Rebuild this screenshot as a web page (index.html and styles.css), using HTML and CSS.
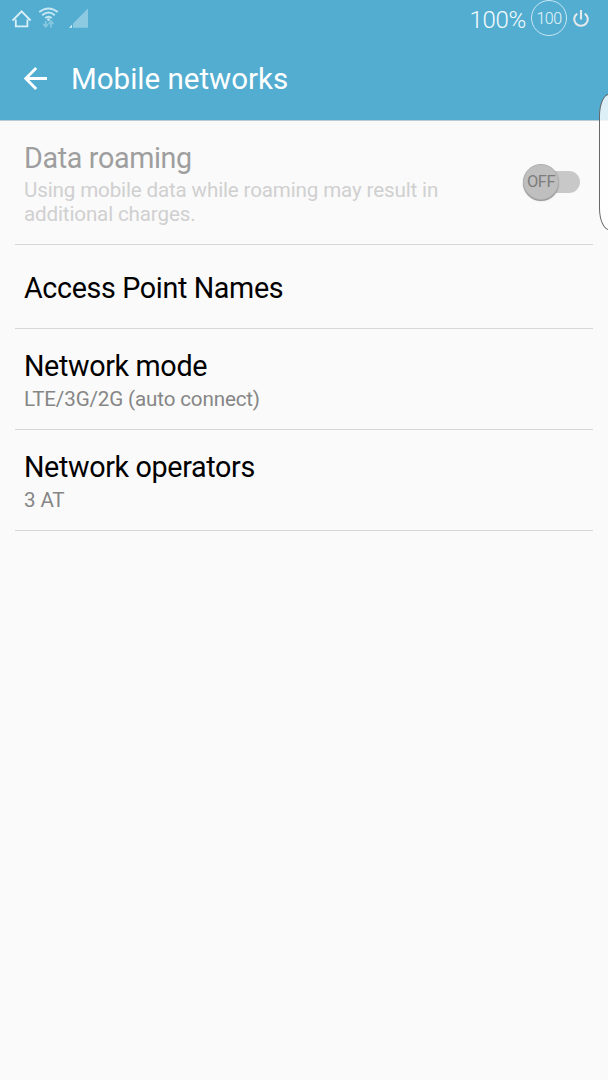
FILE: index.html
```html
<!DOCTYPE html>
<html lang="en">
<head>
  <meta charset="UTF-8">
  <meta name="viewport" content="width=device-width, initial-scale=1.0">
  <title>Mobile networks</title>
  <link rel="stylesheet" href="styles.css">
</head>
<body>
  <header class="header">
    <div class="status-bar">
      <div class="status-left">
        <svg class="icon-home" width="20" height="18" viewBox="0 0 20 18">
          <path d="M0.6 10.5 L9.6 1.4 L18.6 10.5 M3.8 9.5 V16.4 H15.4 V9.5" />
        </svg>
        <svg class="icon-wifi" width="22" height="22" viewBox="0 0 22 22">
          <path class="wave" d="M1.2 5 Q10.5 -2.2 19.8 5 M4.2 8.2 Q10.5 3 16.8 8.2 M7.2 11 Q10.5 8.4 13.8 11" />
          <circle cx="10.5" cy="12.6" r="1.4" />
          <path class="arrows" d="M7.7 14 V19.5 M5.4 17 L7.7 19.8 L10 17 M13 20.5 V15 M10.7 17 L13 14.2 L15.3 17" />
        </svg>
        <svg class="icon-signal" width="20" height="20" viewBox="0 0 20 20">
          <path class="empty" d="M19 0.5 V19.8 H4 V15.5 Z" />
          <path class="level" d="M0 19.8 L3 16.8 V19.8 Z" />
        </svg>
      </div>
      <div class="status-right">
        <span class="percent">100%</span>
        <span class="battery">100</span>
        <svg class="icon-power" width="18" height="20" viewBox="0 0 18 20">
          <path d="M5.3 4.6 A6.8 6.6 0 1 0 12.7 4.6 M9 1 V10.5" />
        </svg>
      </div>
    </div>
    <div class="app-bar">
      <svg class="icon-back" width="24" height="24" viewBox="0 0 24 24">
        <path d="M12.2 1 L1.8 11.5 L12.2 22 M2 11.5 H23" />
      </svg>
      <h1 class="title">Mobile networks</h1>
    </div>
  </header>

  <main class="settings">
    <div class="setting disabled">
      <div class="setting-text">
        <h2 class="setting-title">Data roaming</h2>
        <p class="setting-summary">Using mobile data while roaming may result in additional charges.</p>
      </div>
      <div class="switch">
        <div class="switch-thumb">OFF</div>
      </div>
    </div>
    <div class="setting single">
      <h2 class="setting-title">Access Point Names</h2>
    </div>
    <div class="setting">
      <div class="setting-text">
        <h2 class="setting-title">Network mode</h2>
        <p class="setting-summary">LTE/3G/2G (auto connect)</p>
      </div>
    </div>
    <div class="setting">
      <div class="setting-text">
        <h2 class="setting-title">Network operators</h2>
        <p class="setting-summary">3 AT</p>
      </div>
    </div>
  </main>

  <div class="edge-handle"></div>
</body>
</html>
```
FILE: styles.css
```css
:root {
  --primary-color: #52add1;
  --background-color: #fafafa;
  --divider-color: #d6d6d6;
}

* {
  box-sizing: border-box;
}

body {
  font-family: Roboto, sans-serif;
  position: relative;
  height: 1080px;
  margin: 0;
  overflow: hidden;
  background-color: var(--background-color);
  color: #000000;
}

h1,
h2,
p {
  margin: 0;
  font-weight: normal;
}

svg {
  display: block;
  fill: none;
}

.header {
  height: 121px;
  background-color: var(--primary-color);
  border-bottom: 1px solid #b9cbd4;
  color: #ffffff;
}

.status-bar {
  display: flex;
  justify-content: space-between;
  height: 36px;
  padding: 0 18px 0 12px;
}

.status-left,
.status-right {
  display: flex;
  align-items: center;
}

.status-left {
  align-items: flex-start;
}

.icon-home {
  margin-top: 10px;
  stroke: #d9f0f9;
  stroke-width: 1.8;
}

.icon-wifi {
  margin: 7px 0 0 6px;
}

.icon-wifi .wave {
  stroke: #c5e6f3;
  stroke-width: 1.9;
}

.icon-wifi circle {
  fill: #c5e6f3;
}

.icon-wifi .arrows {
  stroke: #86c7e0;
  stroke-width: 1.8;
}

.icon-signal {
  margin: 8px 0 0 9px;
}

.icon-signal .empty {
  fill: #8ccae2;
}

.icon-signal .level {
  fill: #d9f0f9;
}

.percent {
  padding-top: 3px;
  font-size: 24px;
  font-weight: 300;
  letter-spacing: -0.3px;
  color: #f4fbfd;
}

.battery {
  display: flex;
  align-items: center;
  justify-content: center;
  width: 36px;
  height: 36px;
  margin: 0 5px;
  border: 1px solid #c9e7f3;
  border-radius: 50%;
  font-size: 16px;
  font-weight: 300;
  letter-spacing: -0.6px;
  color: #e8f6fb;
}

.icon-power {
  margin-top: 1px;
  stroke: #e4e9ec;
  stroke-width: 2.1;
}

.app-bar {
  display: flex;
  align-items: center;
  height: 85px;
  padding-left: 24px;
}

.icon-back {
  stroke: #ffffff;
  stroke-width: 2.8;
}

.title {
  margin-left: 23px;
  padding-top: 1px;
  font-size: 29.5px;
}

.settings {
  padding: 0 15px;
}

.setting {
  display: flex;
  justify-content: space-between;
  padding: 20px 13px 18px 9px;
  border-bottom: 1px solid var(--divider-color);
}

.setting.single {
  align-items: center;
  height: 84px;
  padding-top: 2px;
  padding-bottom: 0;
}

.setting-text {
  width: 440px;
}

.setting-title {
  font-size: 28.7px;
  line-height: 34px;
  letter-spacing: -0.35px;
}

.setting-summary {
  margin-top: 4px;
  font-size: 20.6px;
  line-height: 24px;
  letter-spacing: -0.15px;
  color: #868686;
}

.disabled .setting-title {
  color: #9e9e9e;
}

.disabled .setting-summary {
  margin-top: 3px;
  color: #d0d0d0;
}

.switch {
  display: flex;
  align-items: center;
  align-self: center;
  width: 57px;
  height: 22px;
  margin-bottom: 4px;
  border-radius: 11px;
  background: linear-gradient(to right, transparent 18px, #c8c8c8 18px);
}

.switch-thumb {
  display: flex;
  align-items: center;
  justify-content: center;
  flex: none;
  width: 36px;
  height: 36px;
  border: 1px solid #b0b0b0;
  border-radius: 50%;
  background-color: #bfbfbf;
  box-shadow: 0 1px 1px #8f8f8f;
  font-size: 16.5px;
  letter-spacing: -0.5px;
  color: #7d7d7d;
}

/* edge panel handle sitting over the right side of the screen */
.edge-handle {
  position: absolute;
  top: 94px;
  right: -12px;
  width: 21px;
  height: 136px;
  border: 1px solid #666666;
  border-radius: 10px / 22px;
  background-color: rgba(255, 255, 255, 0.8);
}
```
